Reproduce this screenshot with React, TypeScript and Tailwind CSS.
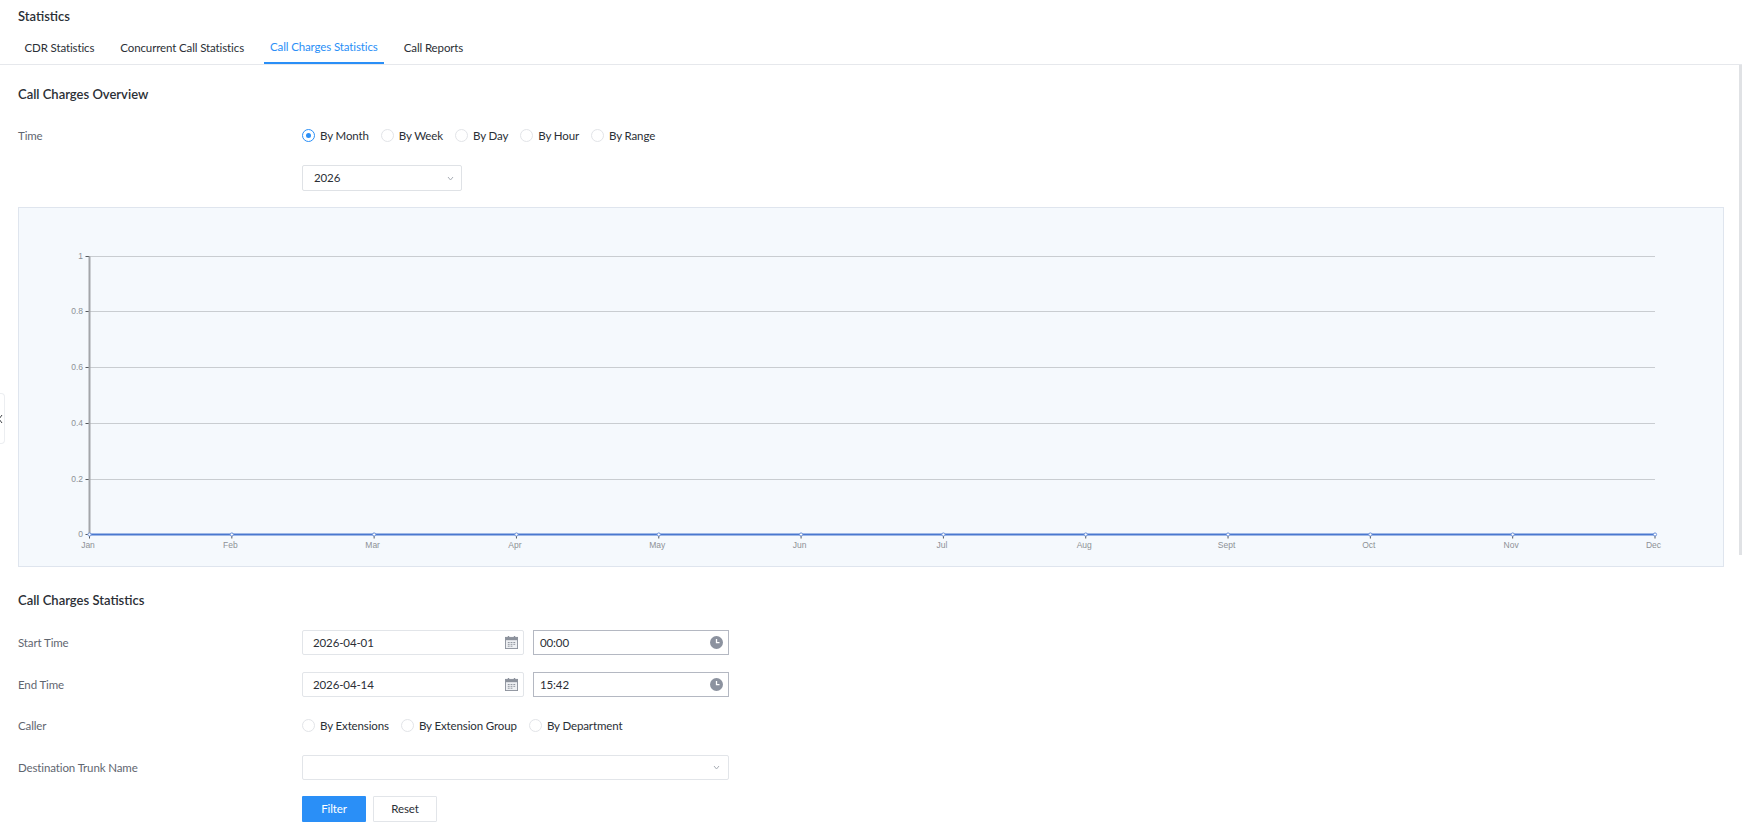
import React from "react";

const months = ["Jan", "Feb", "Mar", "Apr", "May", "Jun", "Jul", "Aug", "Sept", "Oct", "Nov", "Dec"];

/* Chart coordinates are relative to the panel's top left corner */
const PLOT_LEFT = 70.5;
const PLOT_RIGHT = 1636;
const PLOT_TOP = 48.5;
const PLOT_BOTTOM = 326.5;

const yTicks = [
  { label: "1", y: PLOT_TOP },
  { label: "0.8", y: 103.5 },
  { label: "0.6", y: 159.5 },
  { label: "0.4", y: 215.5 },
  { label: "0.2", y: 271.5 },
  { label: "0", y: PLOT_BOTTOM },
];

const Radio = ({ label, checked }: { label: string; checked?: boolean }) => (
  <label className="flex items-center">
    <span
      className={`mb-[2px] mr-[5px] flex h-[13px] w-[13px] items-center justify-center rounded-full border bg-white ${
        checked ? "border-[#2a8ff7]" : "border-[#e2e4e8]"
      }`}
    >
      {checked && <span className="h-[5px] w-[5px] rounded-full bg-[#2a8ff7]" />}
    </span>
    <span className="text-[11.5px] tracking-[-0.12px] text-[#2b2f36]">{label}</span>
  </label>
);

const Chevron = () => (
  <svg width="7" height="5" viewBox="0 0 7 5" fill="none" stroke="#a8adb5" strokeWidth="1">
    <path d="M1 1l2.5 3L6 1" />
  </svg>
);

const CalendarIcon = () => (
  <svg width="13" height="13" viewBox="0 0 14 14" fill="none" className="mr-[1px]">
    <rect x="0.5" y="1.5" width="13" height="12" fill="#eef0f3" stroke="#8c929c" />
    <rect x="0.5" y="1.5" width="13" height="3" fill="#8c929c" />
    <rect x="3" y="0" width="1.5" height="3" fill="#8c929c" />
    <rect x="9.5" y="0" width="1.5" height="3" fill="#8c929c" />
    <path d="M3 7h2M6 7h2M9 7h2M3 9h2M6 9h2M9 9h2M3 11h2M6 11h2" stroke="#8c929c" />
  </svg>
);

const ClockIcon = () => (
  <svg width="13" height="13" viewBox="0 0 13 13">
    <circle cx="6.5" cy="6.5" r="6.5" fill="#8c929f" />
    <path d="M6.5 3v3.7h3" fill="none" stroke="#fff" strokeWidth="1.3" />
  </svg>
);

const FormRow = ({ label, children, className }: { label: string; children: React.ReactNode; className?: string }) => (
  <div className={`flex items-center ${className ?? ""}`}>
    <div className="w-[284px] shrink-0 text-[11.5px] tracking-[-0.12px] text-[#5f6670]">{label}</div>
    {children}
  </div>
);

const DateTime = ({ date, time }: { date: string; time: string }) => (
  <div className="flex gap-[9px]">
    <div className="flex h-[25px] w-[222px] items-center justify-between rounded-[2px] border border-[#e2e5e9] bg-white pl-[10px] pr-[4px] text-[11.5px] tracking-[-0.12px] text-[#2b2f36]">
      {date}
      <CalendarIcon />
    </div>
    <div className="flex h-[25px] w-[196px] items-center justify-between border border-[#b4b8c2] bg-white pl-[6px] pr-[5px] text-[11.5px] tracking-[-0.12px] text-[#2b2f36]">
      {time}
      <ClockIcon />
    </div>
  </div>
);

const Chart = () => (
  <div className="mt-[16px] h-[360px] border border-[#dfe5ee] bg-[#f5f9fd]">
    <svg width="1704" height="358" fontFamily="'Liberation Sans', Arial, sans-serif" fontSize="8.5" fill="#8d9196">
      {/* Grid and y axis */}
      {yTicks.map(({ label, y }, i) => (
        <g key={label}>
          {i < 5 && <line x1={PLOT_LEFT} x2={PLOT_RIGHT} y1={y} y2={y} stroke="#c9cdd1" />}
          <line x1={PLOT_LEFT - 4} x2={PLOT_LEFT} y1={y} y2={y} stroke="#55585c" />
          <text x={PLOT_LEFT - 6.5} y={y + 2} textAnchor="end">
            {label}
          </text>
        </g>
      ))}
      <line x1={PLOT_LEFT} x2={PLOT_LEFT} y1={PLOT_TOP} y2={PLOT_BOTTOM} stroke="#a3a6aa" strokeWidth="2" />
      {/* Series, flat at zero */}
      <line x1={PLOT_LEFT} x2={PLOT_RIGHT} y1={PLOT_BOTTOM} y2={PLOT_BOTTOM} stroke="#4a78cf" strokeWidth="2" />
      {months.map((month, i) => {
        const x = PLOT_LEFT + ((PLOT_RIGHT - PLOT_LEFT) / 11) * i;
        return (
          <g key={month}>
            <line x1={x} x2={x} y1={PLOT_BOTTOM} y2={PLOT_BOTTOM + 4} stroke="#55585c" />
            <circle cx={x} cy={PLOT_BOTTOM} r="1.6" fill="#fff" stroke="#6f95dc" />
            <text x={x - 1.5} y={PLOT_BOTTOM + 13} textAnchor="middle">
              {month}
            </text>
          </g>
        );
      })}
    </svg>
  </div>
);

export default function App() {
  return (
    <div className="relative h-[834px] overflow-hidden bg-white font-['Lato',sans-serif]">
      {/* Header + tabs */}
      <div className="h-[65px] border-b border-[#e6e8ec]">
        <div className="pl-[18px] pt-[8px] text-[13px] font-semibold leading-[17px] text-[#2b2f36]">Statistics</div>
        <div className="mt-[6px] flex pl-[18px] text-[11.5px] tracking-[-0.12px] text-[#2b2f36]">
          <div className="flex h-[33px] items-center px-[6.5px]">CDR Statistics</div>
          <div className="ml-[13px] flex h-[33px] items-center px-[6.5px]">Concurrent Call Statistics</div>
          <div className="ml-[13px] flex h-[33px] items-center border-b-2 border-[#2a8ff7] px-[6.5px] text-[#2a8ff7]">
            Call Charges Statistics
          </div>
          <div className="ml-[13px] flex h-[33px] items-center px-[6.5px]">Call Reports</div>
        </div>
      </div>

      <div className="px-[18px]">
        <h2 className="mt-[20px] text-[13px] font-semibold leading-[18px] text-[#2b2f36]">Call Charges Overview</h2>

        <FormRow label="Time" className="mt-[23px] h-[20px]">
          <div className="flex gap-[12px]">
            <Radio label="By Month" checked />
            <Radio label="By Week" />
            <Radio label="By Day" />
            <Radio label="By Hour" />
            <Radio label="By Range" />
          </div>
        </FormRow>

        <div className="ml-[284px] mt-[19px] flex h-[26px] w-[160px] items-center justify-between rounded-[2px] border border-[#dfe2e6] bg-white pl-[11px] pr-[7px] text-[11.5px] tracking-[-0.12px] text-[#2b2f36]">
          2026
          <Chevron />
        </div>

        <Chart />

        <h2 className="mt-[24px] text-[13px] font-semibold leading-[18px] text-[#2b2f36]">Call Charges Statistics</h2>

        <FormRow label="Start Time" className="mt-[21px]">
          <DateTime date="2026-04-01" time="00:00" />
        </FormRow>
        <FormRow label="End Time" className="mt-[17px]">
          <DateTime date="2026-04-14" time="15:42" />
        </FormRow>
        <FormRow label="Caller" className="mt-[19px] h-[20px]">
          <div className="flex gap-[12px]">
            <Radio label="By Extensions" />
            <Radio label="By Extension Group" />
            <Radio label="By Department" />
          </div>
        </FormRow>
        <FormRow label="Destination Trunk Name" className="mt-[19px]">
          <div className="flex h-[25px] w-[427px] items-center justify-end rounded-[2px] border border-[#e2e5e9] bg-white pr-[8px]">
            <Chevron />
          </div>
        </FormRow>
        <div className="ml-[284px] mt-[16px] flex gap-[7px] text-[11.5px] tracking-[-0.12px]">
          <button className="h-[26px] w-[64px] rounded-[1px] bg-[#2a8ff7] text-white">Filter</button>
          <button className="h-[26px] w-[64px] rounded-[1px] border border-[#e2e5e9] bg-white text-[#2b2f36]">Reset</button>
        </div>
      </div>

      {/* Collapsed side panel handle */}
      <div className="absolute left-0 top-[393px] flex h-[51px] w-[5px] items-center overflow-hidden rounded-r-[4px] border border-l-0 border-[#eceef1] bg-white">
        <svg width="3" height="8" viewBox="0 0 3 8" fill="none" stroke="#3f4246" className="shrink-0">
          <path d="M2 0L-1 4l3 4" />
        </svg>
      </div>

      {/* Scrollbar thumb */}
      <div className="absolute right-0 top-[65px] h-[490px] w-[3px] bg-[#e0e2e5]" />
    </div>
  );
}
